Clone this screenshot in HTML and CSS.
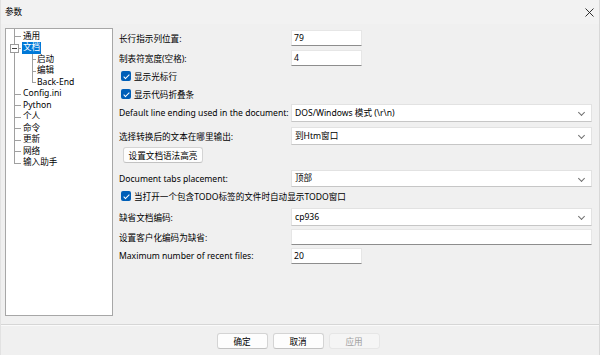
FILE: index.html
```html
<!DOCTYPE html>
<html lang="zh">
<head>
<meta charset="utf-8">
<title>参数</title>
<link rel="stylesheet" href="styles.css">
</head>
<body>
<div class="window">
  <div class="titlebar">
    <span class="title">参数</span>
    <svg class="close" width="9" height="9" viewBox="0 0 9 9"><path d="M0.5 0.5 L8.5 8.5 M8.5 0.5 L0.5 8.5" stroke="#1a1a1a" stroke-width="0.9" fill="none"/></svg>
  </div>
  <div class="main">
    <div class="tree">
      <ul class="tree-root">
        <li><span class="node">通用</span></li>
        <li><span class="expander"></span><span class="node selected">文档</span>
          <ul class="tree-children">
            <li><span class="node">启动</span></li>
            <li><span class="node">编辑</span></li>
            <li><span class="node">Back-End</span></li>
          </ul>
        </li>
        <li><span class="node">Config.ini</span></li>
        <li><span class="node">Python</span></li>
        <li><span class="node">个人</span></li>
        <li><span class="node">命令</span></li>
        <li><span class="node">更新</span></li>
        <li><span class="node">网络</span></li>
        <li><span class="node">输入助手</span></li>
      </ul>
    </div>
    <div class="form">
      <div class="row r1">
        <span class="label">长行指示列位置:</span>
        <div class="input short">79</div>
      </div>
      <div class="row r2">
        <span class="label">制表符宽度(空格):</span>
        <div class="input short">4</div>
      </div>
      <div class="row check r3">
        <span class="checkbox"></span><span>显示光标行</span>
      </div>
      <div class="row check r4">
        <span class="checkbox"></span><span>显示代码折叠条</span>
      </div>
      <div class="row r5">
        <span class="label">Default line ending used in the document:</span>
        <div class="select">DOS/Windows 模式 (\r\n)<span class="chev"></span></div>
      </div>
      <div class="row r6">
        <span class="label">选择转换后的文本在哪里输出:</span>
        <div class="select">到Htm窗口<span class="chev"></span></div>
      </div>
      <div class="row r7">
        <div class="button wide">设置文档语法高亮</div>
      </div>
      <div class="row r8">
        <span class="label">Document tabs placement:</span>
        <div class="select">顶部<span class="chev"></span></div>
      </div>
      <div class="row check r9">
        <span class="checkbox"></span><span>当打开一个包含TODO标签的文件时自动显示TODO窗口</span>
      </div>
      <div class="row r10">
        <span class="label">缺省文档编码:</span>
        <div class="select">cp936<span class="chev"></span></div>
      </div>
      <div class="row r11">
        <span class="label">设置客户化编码为缺省:</span>
        <div class="input long"></div>
      </div>
      <div class="row r12">
        <span class="label">Maximum number of recent files:</span>
        <div class="input short">20</div>
      </div>
    </div>
  </div>
  <div class="separator"></div>
  <div class="buttons">
    <div class="button">确定</div>
    <div class="button">取消</div>
    <div class="button disabled">应用</div>
  </div>
</div>
</body>
</html>
```

FILE: styles.css
```css
html, body {
  margin: 0;
  padding: 0;
}
body {
  width: 600px;
  height: 355px;
  background: #f0f0f0;
  font-family: "Noto Sans", "Noto Sans CJK SC", sans-serif;
  font-size: 8.6px;
  color: #000000;
  overflow: hidden;
}
.window {
  width: 600px;
  height: 355px;
  display: flex;
  flex-direction: column;
  box-sizing: border-box;
  border-left: 1px solid #e2e2e2;
  border-right: 1px solid #d8d8d8;
  background: #f0f0f0;
}
.titlebar {
  height: 24px;
  display: flex;
  align-items: center;
  justify-content: space-between;
  padding: 0 5px 2px 4px;
  box-sizing: border-box;
  background: #f2f2f2;
}
.close {
  margin-top: 2px;
}
.main {
  display: flex;
  align-items: flex-start;
  padding: 4px 0 0 4px;
  height: 292px;
  box-sizing: border-box;
}
.tree {
  width: 108px;
  height: 288px;
  box-sizing: border-box;
  border: 1px solid #a7a7a7;
  background: #ffffff;
}
.tree ul {
  list-style: none;
  margin: 0;
  padding: 0;
  position: relative;
}
.tree li {
  position: relative;
  line-height: 11.5px;
}
.tree-root {
  padding: 1.5px 0 0 16px !important;
}
.tree-root::before {
  content: "";
  position: absolute;
  left: 8px;
  top: 0;
  bottom: 5.75px;
  border-left: 1px solid #a0a0a0;
}
.tree-root > li::before {
  content: "";
  position: absolute;
  left: -8px;
  top: 5.5px;
  width: 7px;
  border-top: 1px solid #a0a0a0;
}
.tree-children {
  padding-left: 14px !important;
}
.tree-children::before {
  content: "";
  position: absolute;
  left: 10px;
  top: 0;
  bottom: 5.75px;
  border-left: 1px solid #a0a0a0;
}
.tree-children > li::before {
  content: "";
  position: absolute;
  left: -4px;
  top: 5.5px;
  width: 4px;
  border-top: 1px solid #a0a0a0;
}
.node {
  padding: 0 1px;
  display: inline-block;
  line-height: 11.5px;
}
.node.selected {
  background: #0078d7;
  color: #ffffff;
}
.expander {
  position: absolute;
  left: -12px;
  top: 1.5px;
  width: 9px;
  height: 9px;
  box-sizing: border-box;
  border: 1px solid #9a9a9a;
  background: #ffffff;
  z-index: 1;
}
.expander::after {
  content: "";
  position: absolute;
  left: 1px;
  top: 3px;
  width: 5px;
  border-top: 1px solid #404040;
}
.form {
  margin-left: 6px;
  width: 473px;
  display: flex;
  flex-direction: column;
}
.row {
  display: flex;
  align-items: center;
}
.label {
  width: 172px;
  flex: none;
  white-space: nowrap;
}
.input {
  height: 16px;
  box-sizing: border-box;
  background: #ffffff;
  border: 1px solid #e6e6e6;
  border-bottom-color: #8d8d8d;
  padding-left: 2px;
  line-height: 14px;
}
.input.short {
  width: 71px;
}
.input.long {
  width: 301px;
}
.select {
  position: relative;
  width: 301px;
  height: 18px;
  box-sizing: border-box;
  background: #ffffff;
  border: 1px solid #e2e2e2;
  border-bottom-color: #c6c6c6;
  padding-left: 3px;
  line-height: 16px;
}
.chev {
  position: absolute;
  right: 7px;
  top: 5px;
  width: 4px;
  height: 4px;
  border-right: 1px solid #707070;
  border-bottom: 1px solid #707070;
  transform: rotate(45deg);
}
.check {
  height: 14px;
  padding-left: 2px;
}
.checkbox {
  width: 10px;
  height: 10px;
  border-radius: 2px;
  background: #005fb8;
  margin-right: 3px;
  position: relative;
  flex: none;
}
.checkbox::after {
  content: "";
  position: absolute;
  left: 3.5px;
  top: 1.5px;
  width: 2px;
  height: 5px;
  border-right: 1.2px solid #ffffff;
  border-bottom: 1.2px solid #ffffff;
  transform: rotate(45deg);
}
.r1 { margin-top: 2px; height: 16px; }
.r2 { margin-top: 4px; height: 16px; }
.r3 { margin-top: 3px; }
.r4 { margin-top: 4px; }
.r5 { margin-top: 3px; height: 18px; }
.r6 { margin-top: 5px; height: 18px; }
.r7 { margin-top: 2px; height: 16px; }
.r8 { margin-top: 7px; height: 17px; }
.r8 .select { height: 17px; line-height: 15px; }
.r9 { margin-top: 2px; }
.r10 { margin-top: 5px; height: 18px; }
.r11 { margin-top: 3px; height: 16px; }
.r12 { margin-top: 3px; height: 16px; }
.button {
  height: 16px;
  width: 51px;
  box-sizing: border-box;
  background: #fdfdfd;
  border: 1px solid #d4d4d4;
  border-bottom-color: #c2c2c2;
  border-radius: 3px;
  display: flex;
  align-items: center;
  justify-content: center;
}
.button.wide {
  width: 80px;
  margin-left: 4px;
}
.button.disabled {
  background: #f5f5f5;
  border-color: #e6e6e6;
  color: #a0a0a0;
}
.separator {
  margin-top: 8px;
  height: 1px;
  background: #d6d6d6;
  border-bottom: 1px solid #fafafa;
}
.buttons {
  margin-top: 7px;
  display: flex;
  justify-content: center;
  gap: 5px;
  padding-right: 4px;
}
```
